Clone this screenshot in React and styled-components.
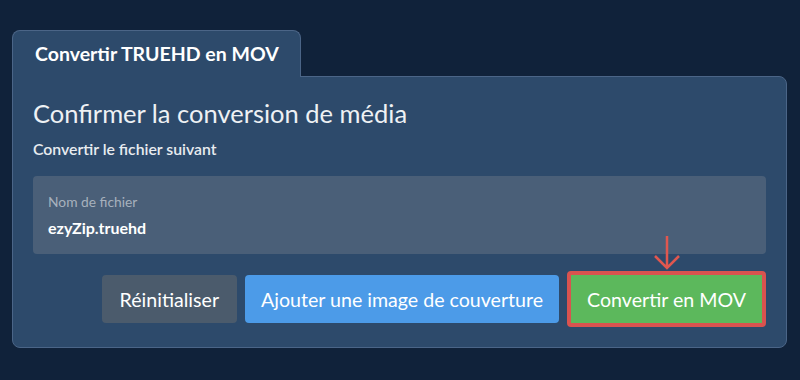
import React from "react";
import styled, { createGlobalStyle } from "styled-components";

const Global = createGlobalStyle`
  html, body { margin: 0; padding: 0; background: #10223a; }
  body { font-family: Lato, "Open Sans", sans-serif; width: 800px; height: 380px; overflow: hidden; }
`;

const Page = styled.div`
  padding: 30px 13px 0 12px;
  display: flex;
  flex-direction: column;
`;

const Tab = styled.div`
  align-self: flex-start;
  width: 289px;
  height: 47px;
  box-sizing: border-box;
  background: #2d4a6b;
  border: 1px solid #4b6587;
  border-bottom: none;
  border-radius: 8px 8px 0 0;
  color: #fff;
  font-weight: 700;
  font-size: 19.5px;
  line-height: 24px;
  padding: 11px 0 0 22px;
  position: relative;
  z-index: 1;
  margin-bottom: -1px;
`;

const Panel = styled.div`
  background: #2d4a6b;
  border: 1px solid #4b6587;
  border-radius: 0 8px 8px 8px;
  padding: 20px 20px 20px 20px;
  display: flex;
  flex-direction: column;
`;

const Heading = styled.h2`
  margin: 0;
  font-size: 25.5px;
  font-weight: 400;
  color: #eef1f4;
  line-height: 32px;
`;

const Sub = styled.div`
  margin-top: 10px;
  font-size: 15.8px;
  font-weight: 600;
  color: #e8ecf0;
  line-height: 20px;
`;

const Field = styled.div`
  margin-top: 17px;
  background: #4a5f78;
  border-radius: 4px;
  height: 78px;
  box-sizing: border-box;
  padding: 17px 15px 0;
`;

const Label = styled.div`
  font-size: 13.8px;
  color: #a7b1bd;
  line-height: 18px;
`;

const Value = styled.div`
  margin-top: 7px;
  font-size: 16px;
  font-weight: 700;
  color: #fff;
  line-height: 20px;
`;

const Actions = styled.div`
  margin-top: 17px;
  display: flex;
  justify-content: flex-end;
  align-items: center;
  gap: 8px;
`;

const Button = styled.button`
  font-family: Lato, sans-serif;
  font-size: 19.6px;
  color: #fff;
  border: none;
  border-radius: 4px;
  height: 48px;
  padding: 0 ${(p) => p.$pad || 16}px;
  background: ${(p) => p.$bg};
  cursor: pointer;
`;

const Highlight = styled.div`
  position: relative;
  border: 4px solid #d9534f;
  border-radius: 4px;
  display: flex;
`;

const GreenButton = styled(Button)`
  border-radius: 0;
`;

const Arrow = styled.svg`
  position: absolute;
  left: 50%;
  top: -40px;
  transform: translateX(-50%);
`;

export default function App() {
  return (
    <>
      <Global />
      <Page>
        <Tab>Convertir TRUEHD en MOV</Tab>
        <Panel>
          <Heading>Confirmer la conversion de média</Heading>
          <Sub>Convertir le fichier suivant</Sub>
          <Field>
            <Label>Nom de fichier</Label>
            <Value>ezyZip.truehd</Value>
          </Field>
          <Actions>
            <Button $bg="#4b5b6c" $pad={18}>Réinitialiser</Button>
            <Button $bg="#4c9be8" $pad={16}>Ajouter une image de couverture</Button>
            <Highlight>
              <Arrow width="30" height="36" viewBox="0 0 30 36">
                <path d="M15 1 V33 M3 21 L15 33 L27 21" fill="none" stroke="#e0574f" strokeWidth="2.5" />
              </Arrow>
              <GreenButton $bg="#5cb85c" $pad={16}>Convertir en MOV</GreenButton>
            </Highlight>
          </Actions>
        </Panel>
      </Page>
    </>
  );
}
